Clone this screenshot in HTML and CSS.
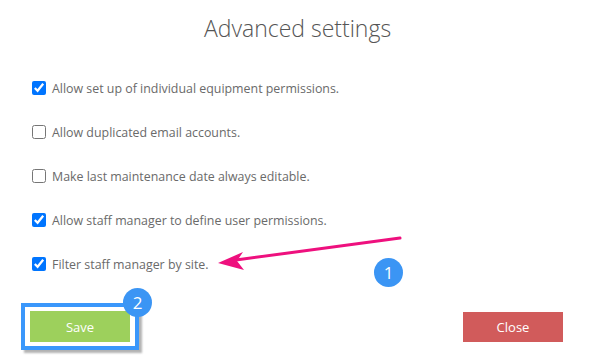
FILE: index.html
```html
<!DOCTYPE html>
<html lang="en">
<head>
    <meta charset="UTF-8">
    <meta name="viewport" content="width=device-width, initial-scale=1.0">
    <title>Advanced settings</title>
    <link rel="stylesheet" href="styles.css">
</head>
<body>

<div class="dialog">
    <h1 class="title">Advanced settings</h1>

    <ul class="options">
        <li><label><input type="checkbox" checked> Allow set up of individual equipment permissions.</label></li>
        <li><label><input type="checkbox"> Allow duplicated email accounts.</label></li>
        <li><label><input type="checkbox"> Make last maintenance date always editable.</label></li>
        <li><label><input type="checkbox" checked> Allow staff manager to define user permissions.</label></li>
        <li><label><input type="checkbox" checked> Filter staff manager by site.</label></li>
    </ul>

    <div class="actions">
        <div class="save-frame">
            <button class="btn save">Save</button>
        </div>
        <button class="btn close">Close</button>
    </div>

    <!-- annotations drawn over the dialog -->
    <svg class="arrow" width="595" height="356" viewBox="0 0 595 356">
        <line x1="400" y1="238" x2="236" y2="260" stroke="#ee107e" stroke-width="3" stroke-linecap="round"/>
        <path d="M218 263 L243 252 L237 261 L244 270 Z" fill="#ee107e"/>
    </svg>
    <span class="badge badge-1">1</span>
    <span class="badge badge-2">2</span>
</div>

</body>
</html>
```

FILE: styles.css
```css
body {
    margin: 0;
    background: #fff;
    font-family: 'Open Sans', 'Liberation Sans', sans-serif;
}
.dialog {
    position: relative;
    width: 595px;
    height: 356px;
    overflow: hidden;
}
.title {
    margin: 12px 0 0;
    text-align: center;
    font-size: 23px;
    line-height: 32px;
    font-weight: 300;
    color: #555;
}
.options {
    list-style: none;
    margin: 34px 0 0;
    padding: 0 0 0 32px;
    display: flex;
    flex-direction: column;
    gap: 24px;
}
.options li {
    height: 20px;
}
.options label {
    display: flex;
    align-items: center;
    gap: 6px;
    height: 20px;
    font-size: 12.4px;
    color: #6a6a6a;
}
.options input {
    margin: 0;
    width: 14px;
    height: 14px;
}
.actions {
    display: flex;
    justify-content: space-between;
    align-items: center;
    margin-top: 29px;
    padding: 0 32px 0 21px;
}
.save-frame {
    border: 4px solid #3a97fb;
    padding: 4px 5px;
    background: #fff;
    box-shadow: 3px 3px 2px rgba(0, 0, 0, 0.3);
}
.btn {
    display: block;
    width: 100px;
    height: 31px;
    border: none;
    color: #fff;
    font-family: 'Open Sans', 'Liberation Sans', sans-serif;
    font-size: 13px;
    font-weight: 400;
}
.save {
    background-color: #9dd05c;
}
.close {
    background-color: #d15b5b;
    height: 30px;
}
.arrow {
    position: absolute;
    left: 0;
    top: 0;
}
.badge {
    position: absolute;
    width: 29px;
    height: 29px;
    border-radius: 50%;
    background: #3b95f4;
    color: #fff;
    font-family: 'Open Sans', sans-serif;
    font-size: 17px;
    line-height: 29px;
    text-align: center;
}
.badge-1 {
    left: 374px;
    top: 258px;
}
.badge-2 {
    left: 123px;
    top: 288px;
}
```
